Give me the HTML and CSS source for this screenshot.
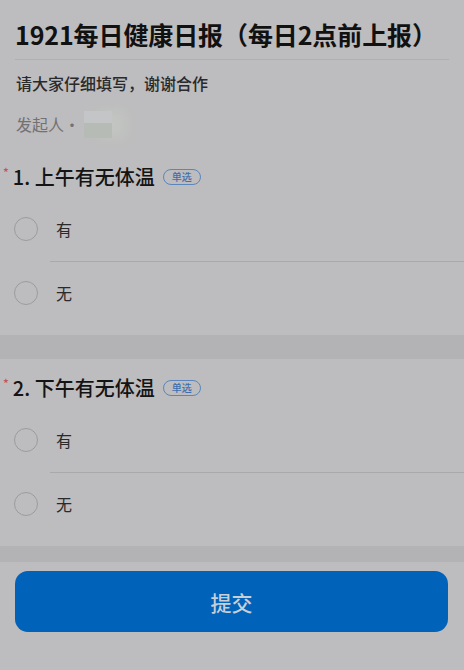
FILE: index.html
```html
<!DOCTYPE html>
<html lang="zh-CN">
<head>
    <meta charset="UTF-8">
    <meta name="viewport" content="width=device-width, initial-scale=1.0">
    <title>1921每日健康日报</title>
    <link rel="stylesheet" href="styles.css">
</head>
<body>
    <div class="header">
        <h1>1921每日健康日报（每日2点前上报）</h1>
        <p class="desc">请大家仔细填写，谢谢合作</p>
        <div class="author">发起人·<span class="avatar"></span></div>
    </div>

    <div class="question">
        <div class="q-title"><span class="star">*</span>1. 上午有无体温<span class="badge">单选</span></div>
        <div class="option"><span class="radio"></span><span class="label">有</span></div>
        <div class="option"><span class="radio"></span><span class="label">无</span></div>
    </div>

    <div class="gap"></div>

    <div class="question">
        <div class="q-title"><span class="star">*</span>2. 下午有无体温<span class="badge">单选</span></div>
        <div class="option"><span class="radio"></span><span class="label">有</span></div>
        <div class="option"><span class="radio"></span><span class="label">无</span></div>
    </div>

    <div class="gap gap-last"></div>

    <div class="footer">
        <button class="submit">提交</button>
    </div>
</body>
</html>
```

FILE: styles.css
```css
body {
    margin: 0;
    background-color: #bdbcbe;
    font-family: "Noto Sans CJK SC", "Noto Sans", sans-serif;
    color: #111;
}
.header {
    height: 148px;
    box-sizing: border-box;
    padding: 14px 15px 0 15px;
}
h1 {
    margin: 0;
    font-size: 25px;
    font-weight: bold;
    line-height: 40px;
    padding-bottom: 5px;
    border-bottom: 1px solid #b0afb1;
    letter-spacing: -0.1px;
    white-space: nowrap;
}
.desc {
    margin: 11px 0 0 1px;
    font-size: 16px;
    font-weight: 500;
    line-height: 24px;
    color: #2a2a2a;
}
.author {
    display: flex;
    align-items: center;
    margin: 15px 0 0 1px;
    font-size: 16px;
    line-height: 26px;
    color: #727173;
    height: 28px;
}
.avatar {
    display: inline-block;
    width: 28px;
    height: 27px;
    margin-left: 4px;
    background: linear-gradient(#c4c5c7 0 45%, #b6bbb5 45% 100%);
    box-shadow: 14px 0 14px #c2c6c1;
}
.question {
    padding: 16px 0 10px 0;
}
.q-title {
    display: flex;
    align-items: center;
    font-size: 20px;
    font-weight: 500;
    line-height: 26px;
    padding-left: 3px;
    margin-bottom: 7px;
    color: #141414;
}
.star {
    color: #c2555a;
    font-size: 12px;
    margin-right: 4px;
    align-self: flex-start;
    line-height: 16px;
}
.badge {
    margin-left: 8px;
    font-size: 10px;
    line-height: 12px;
    padding: 1px 8px;
    border: 1.5px solid #5a86bb;
    border-radius: 9px;
    color: #3d6fae;
}
.option {
    display: flex;
    align-items: center;
    height: 64px;
    padding-left: 14px;
    position: relative;
}
.option + .option::before {
    content: "";
    position: absolute;
    top: 0;
    left: 50px;
    right: 0;
    border-top: 1px solid #a9a8aa;
}
.radio {
    width: 24px;
    height: 24px;
    border: 1.5px solid #9c9b9d;
    border-radius: 50%;
    box-sizing: border-box;
}
.label {
    margin-left: 18px;
    font-size: 16px;
    color: #2a2a2a;
}
.gap {
    height: 24px;
    background-color: #b3b2b4;
}
.gap-last {
    height: 16px;
}
.footer {
    padding: 9px 16px 0 15px;
}
.submit {
    width: 100%;
    height: 61px;
    border: none;
    border-radius: 13px;
    background-color: #0062b8;
    color: #c9cfd7;
    font-family: "Noto Sans CJK SC", sans-serif;
    font-size: 21px;
    font-weight: 500;
    cursor: pointer;
}
```
